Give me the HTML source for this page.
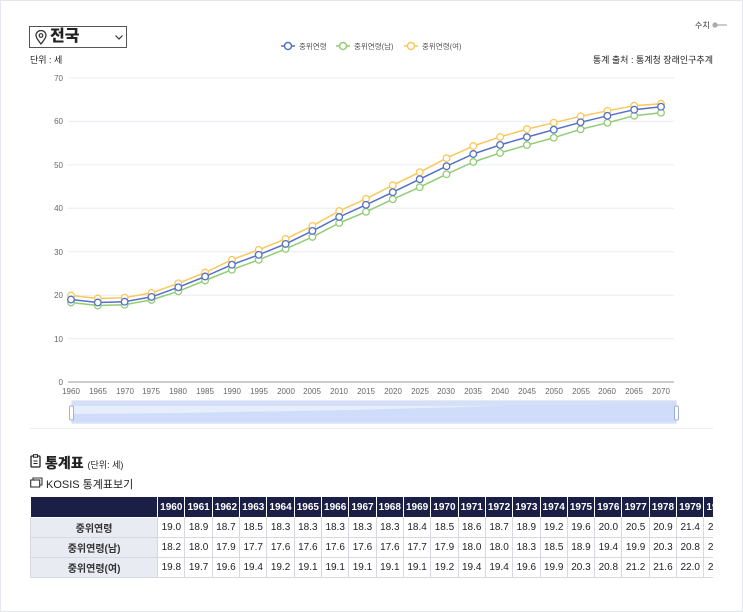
<!DOCTYPE html>
<html><head><meta charset="utf-8"><style>
body{margin:0;width:743px;height:612px;background:#fff;font-family:"Liberation Sans","Noto Sans CJK KR",sans-serif;position:relative;overflow:hidden;color:#222}
.frame{position:absolute;left:0;top:0;width:741px;height:610px;border:1px solid #e4e7ef}
.sel{position:absolute;left:29px;top:26px;width:96px;height:20px;border:1px solid #555;background:#fff}
.sel b{position:absolute;left:20px;top:0;font-size:16px;line-height:20px;font-weight:900}
.abs{position:absolute;white-space:nowrap}
table{border-collapse:collapse;font-size:10px;table-layout:fixed}
td,th{border:1px solid #d7d9e0;text-align:center;padding:0;height:19px;overflow:hidden;white-space:nowrap}
th{background:#1b1f45;color:#fff;font-weight:bold;height:20px;border-color:#fff}
td.l{background:#e9ebf3;font-weight:bold;color:#333}
</style></head><body>
<div class="frame"></div>
<div class="sel"><svg class="abs" style="left:5px;top:3px" width="12" height="15" viewBox="0 0 12 15"><path d="M6 14C2 9 1 7 1 5.5a5 5 0 0 1 10 0C11 7 10 9 6 14z" fill="none" stroke="#333" stroke-width="1.3"/><circle cx="6" cy="5.5" r="1.8" fill="none" stroke="#333" stroke-width="1.2"/></svg><b>전국</b><svg class="abs" style="left:85px;top:8px" width="8" height="5"><path d="M0.5 0.5L4 4L7.5 0.5" fill="none" stroke="#333" stroke-width="1.2"/></svg></div>
<div class="abs" style="left:695px;top:20px;font-size:8px;color:#333">수치</div>
<svg class="abs" style="left:711px;top:22px" width="16" height="6"><line x1="2" y1="3" x2="16" y2="3" stroke="#bbb" stroke-width="1.5"/><circle cx="4" cy="3" r="2.6" fill="#aaa"/></svg>
<div class="abs" style="left:30px;top:53px;font-size:9px">단위 : 세</div>
<div class="abs" style="right:30px;top:53px;font-size:9px">통계 출처 : 통계청 장래인구추계</div>
<svg class="abs" style="left:0;top:0" width="743" height="440">
<g font-size="7.5" fill="#555">
<line x1="281" y1="46" x2="295" y2="46" stroke="#5470c6" stroke-width="1.5"/><circle cx="288" cy="46" r="3.5" fill="#fff" stroke="#5470c6" stroke-width="1.5"/><text x="299" y="49">중위연령</text>
<line x1="336" y1="46" x2="350" y2="46" stroke="#91cc75" stroke-width="1.5"/><circle cx="343" cy="46" r="3.5" fill="#fff" stroke="#91cc75" stroke-width="1.5"/><text x="354" y="49">중위연령(남)</text>
<line x1="404" y1="46" x2="418" y2="46" stroke="#fac858" stroke-width="1.5"/><circle cx="411" cy="46" r="3.5" fill="#fff" stroke="#fac858" stroke-width="1.5"/><text x="422" y="49">중위연령(여)</text>
</g>
<g stroke="#e8ecf4" stroke-width="1">
<line x1="68" y1="78" x2="674" y2="78"/><line x1="68" y1="121.4" x2="674" y2="121.4"/><line x1="68" y1="164.9" x2="674" y2="164.9"/><line x1="68" y1="208.3" x2="674" y2="208.3"/><line x1="68" y1="251.7" x2="674" y2="251.7"/><line x1="68" y1="295.2" x2="674" y2="295.2"/><line x1="68" y1="338.6" x2="674" y2="338.6"/>
</g>
<line x1="68" y1="382" x2="674" y2="382" stroke="#999" stroke-width="1"/>
<g font-size="8" fill="#666" text-anchor="end">
<text x="63" y="81">70</text><text x="63" y="124">60</text><text x="63" y="168">50</text><text x="63" y="211">40</text><text x="63" y="255">30</text><text x="63" y="298">20</text><text x="63" y="342">10</text><text x="63" y="385">0</text>
</g>
<g font-size="8" fill="#666" text-anchor="middle">
<text x="71" y="394">1960</text><text x="98" y="394">1965</text><text x="125" y="394">1970</text><text x="151" y="394">1975</text><text x="178" y="394">1980</text><text x="205" y="394">1985</text><text x="232" y="394">1990</text><text x="259" y="394">1995</text><text x="286" y="394">2000</text><text x="312" y="394">2005</text><text x="339" y="394">2010</text><text x="366" y="394">2015</text><text x="393" y="394">2020</text><text x="420" y="394">2025</text><text x="446" y="394">2030</text><text x="473" y="394">2035</text><text x="500" y="394">2040</text><text x="527" y="394">2045</text><text x="554" y="394">2050</text><text x="581" y="394">2055</text><text x="607" y="394">2060</text><text x="634" y="394">2065</text><text x="661" y="394">2070</text>
</g>
<g fill="none" stroke-width="1.5" stroke-linejoin="round">
<polyline stroke="#91cc75" points="71,302.5 97.8,305.5 124.6,304.7 151.5,299.9 178.3,291.3 205.1,280.5 231.9,269.7 258.7,259.8 285.6,248.9 312.4,236.9 339.2,223 366,211.8 392.8,199.2 419.7,187.2 446.5,174.2 473.3,162 500.1,152.9 526.9,145.1 553.8,137.7 580.6,129.3 607.4,122.8 634.2,115.7 661,112.7"/>
<polyline stroke="#fac858" points="71,295.5 97.8,298.5 124.6,297.7 151.5,292.9 178.3,283.3 205.1,272.5 231.9,259.7 258.7,249.8 285.6,238.9 312.4,225.9 339.2,211 366,198.8 392.8,185.2 419.7,172.2 446.5,158.2 473.3,146 500.1,136.9 526.9,129.1 553.8,122.7 580.6,116.3 607.4,110.8 634.2,105.7 661,103.7"/>
<polyline stroke="#5470c6" points="71,299.5 97.8,302.5 124.6,301.7 151.5,296.9 178.3,287.3 205.1,276.5 231.9,264.7 258.7,254.8 285.6,243.9 312.4,230.9 339.2,217 366,204.8 392.8,192.2 419.7,179.2 446.5,166.2 473.3,154 500.1,144.9 526.9,137.1 553.8,129.7 580.6,122.3 607.4,115.8 634.2,109.7 661,106.7"/>
</g>
<g fill="#fff" stroke-width="1.3">
<g stroke="#91cc75"><circle cx="71" cy="302.5" r="3.3"/><circle cx="97.8" cy="305.5" r="3.3"/><circle cx="124.6" cy="304.7" r="3.3"/><circle cx="151.5" cy="299.9" r="3.3"/><circle cx="178.3" cy="291.3" r="3.3"/><circle cx="205.1" cy="280.5" r="3.3"/><circle cx="231.9" cy="269.7" r="3.3"/><circle cx="258.7" cy="259.8" r="3.3"/><circle cx="285.6" cy="248.9" r="3.3"/><circle cx="312.4" cy="236.9" r="3.3"/><circle cx="339.2" cy="223" r="3.3"/><circle cx="366" cy="211.8" r="3.3"/><circle cx="392.8" cy="199.2" r="3.3"/><circle cx="419.7" cy="187.2" r="3.3"/><circle cx="446.5" cy="174.2" r="3.3"/><circle cx="473.3" cy="162" r="3.3"/><circle cx="500.1" cy="152.9" r="3.3"/><circle cx="526.9" cy="145.1" r="3.3"/><circle cx="553.8" cy="137.7" r="3.3"/><circle cx="580.6" cy="129.3" r="3.3"/><circle cx="607.4" cy="122.8" r="3.3"/><circle cx="634.2" cy="115.7" r="3.3"/><circle cx="661" cy="112.7" r="3.3"/></g>
<g stroke="#fac858"><circle cx="71" cy="295.5" r="3.3"/><circle cx="97.8" cy="298.5" r="3.3"/><circle cx="124.6" cy="297.7" r="3.3"/><circle cx="151.5" cy="292.9" r="3.3"/><circle cx="178.3" cy="283.3" r="3.3"/><circle cx="205.1" cy="272.5" r="3.3"/><circle cx="231.9" cy="259.7" r="3.3"/><circle cx="258.7" cy="249.8" r="3.3"/><circle cx="285.6" cy="238.9" r="3.3"/><circle cx="312.4" cy="225.9" r="3.3"/><circle cx="339.2" cy="211" r="3.3"/><circle cx="366" cy="198.8" r="3.3"/><circle cx="392.8" cy="185.2" r="3.3"/><circle cx="419.7" cy="172.2" r="3.3"/><circle cx="446.5" cy="158.2" r="3.3"/><circle cx="473.3" cy="146" r="3.3"/><circle cx="500.1" cy="136.9" r="3.3"/><circle cx="526.9" cy="129.1" r="3.3"/><circle cx="553.8" cy="122.7" r="3.3"/><circle cx="580.6" cy="116.3" r="3.3"/><circle cx="607.4" cy="110.8" r="3.3"/><circle cx="634.2" cy="105.7" r="3.3"/><circle cx="661" cy="103.7" r="3.3"/></g>
<g stroke="#5470c6"><circle cx="71" cy="299.5" r="3.3"/><circle cx="97.8" cy="302.5" r="3.3"/><circle cx="124.6" cy="301.7" r="3.3"/><circle cx="151.5" cy="296.9" r="3.3"/><circle cx="178.3" cy="287.3" r="3.3"/><circle cx="205.1" cy="276.5" r="3.3"/><circle cx="231.9" cy="264.7" r="3.3"/><circle cx="258.7" cy="254.8" r="3.3"/><circle cx="285.6" cy="243.9" r="3.3"/><circle cx="312.4" cy="230.9" r="3.3"/><circle cx="339.2" cy="217" r="3.3"/><circle cx="366" cy="204.8" r="3.3"/><circle cx="392.8" cy="192.2" r="3.3"/><circle cx="419.7" cy="179.2" r="3.3"/><circle cx="446.5" cy="166.2" r="3.3"/><circle cx="473.3" cy="154" r="3.3"/><circle cx="500.1" cy="144.9" r="3.3"/><circle cx="526.9" cy="137.1" r="3.3"/><circle cx="553.8" cy="129.7" r="3.3"/><circle cx="580.6" cy="122.3" r="3.3"/><circle cx="607.4" cy="115.8" r="3.3"/><circle cx="634.2" cy="109.7" r="3.3"/><circle cx="661" cy="106.7" r="3.3"/></g>
</g>
<rect x="72" y="401" width="604" height="22" fill="#e6edfc" stroke="#c9d6f3"/>
<rect x="72" y="401" width="604" height="5" fill="#d5dff5"/>
<path d="M72 414 L180 413 L350 410 L500 406 L676 403 L676 422 L72 422Z" fill="#cfddfb"/>
<rect x="69.5" y="406" width="4" height="14" rx="1.5" fill="#fff" stroke="#9fb0d0"/>
<rect x="674.5" y="406" width="4" height="14" rx="1.5" fill="#fff" stroke="#9fb0d0"/>
<line x1="30" y1="428.5" x2="713" y2="428.5" stroke="#eceef3"/>
</svg>
<svg class="abs" style="left:30px;top:454px" width="11" height="14"><rect x="1" y="2" width="9" height="11" rx="1" fill="none" stroke="#222" stroke-width="1.3"/><rect x="3.5" y="0.7" width="4" height="2.5" fill="#fff" stroke="#222" stroke-width="1"/><line x1="3.5" y1="7" x2="7.5" y2="7" stroke="#222"/><line x1="3.5" y1="9.5" x2="7.5" y2="9.5" stroke="#222"/></svg>
<div class="abs" style="left:45px;top:453px;font-size:14px;font-weight:900">통계표 <span style="font-size:9px;font-weight:normal">(단위: 세)</span></div>
<svg class="abs" style="left:30px;top:477px" width="13" height="11"><rect x="0.7" y="3" width="9" height="7" fill="none" stroke="#333" stroke-width="1.1"/><path d="M3 3V1H12V8H10" fill="none" stroke="#333" stroke-width="1.1"/></svg>
<div class="abs" style="left:46px;top:476px;font-size:11px">KOSIS 통계표보기</div>
<div class="abs" style="left:30px;top:496px;width:683px;height:84px;overflow:hidden">
<table style="width:866px">
<colgroup><col style="width:127px"><col span="27" style="width:27.3px"></colgroup>
<tr><th></th><th>1960</th><th>1961</th><th>1962</th><th>1963</th><th>1964</th><th>1965</th><th>1966</th><th>1967</th><th>1968</th><th>1969</th><th>1970</th><th>1971</th><th>1972</th><th>1973</th><th>1974</th><th>1975</th><th>1976</th><th>1977</th><th>1978</th><th>1979</th><th>1980</th><th>1981</th></tr>
<tr><td class="l">중위연령</td><td>19.0</td><td>18.9</td><td>18.7</td><td>18.5</td><td>18.3</td><td>18.3</td><td>18.3</td><td>18.3</td><td>18.3</td><td>18.4</td><td>18.5</td><td>18.6</td><td>18.7</td><td>18.9</td><td>19.2</td><td>19.6</td><td>20.0</td><td>20.5</td><td>20.9</td><td>21.4</td><td>21.8</td><td>22.2</td></tr>
<tr><td class="l">중위연령(남)</td><td>18.2</td><td>18.0</td><td>17.9</td><td>17.7</td><td>17.6</td><td>17.6</td><td>17.6</td><td>17.6</td><td>17.6</td><td>17.7</td><td>17.9</td><td>18.0</td><td>18.0</td><td>18.3</td><td>18.5</td><td>18.9</td><td>19.4</td><td>19.9</td><td>20.3</td><td>20.8</td><td>21.3</td><td>21.7</td></tr>
<tr><td class="l">중위연령(여)</td><td>19.8</td><td>19.7</td><td>19.6</td><td>19.4</td><td>19.2</td><td>19.1</td><td>19.1</td><td>19.1</td><td>19.1</td><td>19.1</td><td>19.2</td><td>19.4</td><td>19.4</td><td>19.6</td><td>19.9</td><td>20.3</td><td>20.8</td><td>21.2</td><td>21.6</td><td>22.0</td><td>22.4</td><td>22.8</td></tr>
</table></div>
</body></html>
